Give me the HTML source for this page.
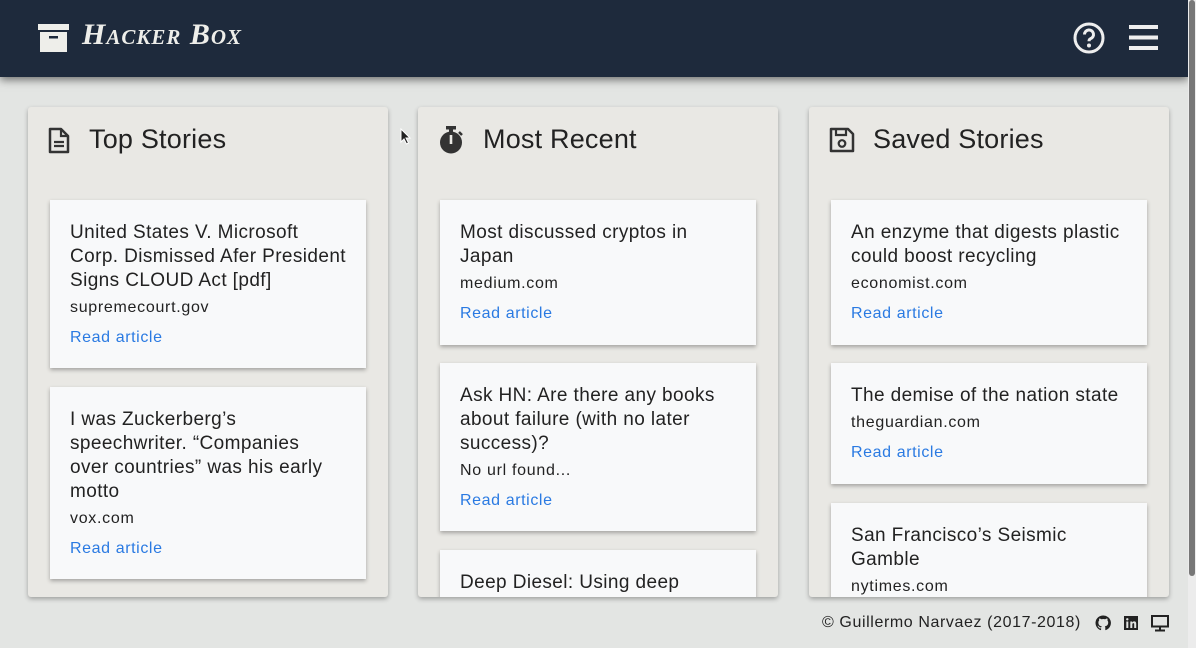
<!DOCTYPE html>
<html><head><meta charset="utf-8"><style>
*{box-sizing:border-box;margin:0;padding:0}
body{width:1196px;height:648px;overflow:hidden;background:#e3e5e3;font-family:"Liberation Sans",sans-serif;position:relative}
.hdr{position:absolute;left:0;top:0;width:1188px;height:77px;background:#1e2a3c;box-shadow:0 3px 8px rgba(0,0,0,.5)}
.logo{position:absolute;left:82px;top:18px;color:#eeeeea;font:italic bold 30px "Liberation Serif",serif;letter-spacing:1px;font-variant:small-caps}
.sb{position:absolute;right:0;top:0;width:8px;height:648px;background:#ececec}
.sb i{position:absolute;left:1px;top:0;width:6px;height:576px;background:#777;border-radius:3px}
.col{position:absolute;top:107px;width:360px;height:490px;background:#e9e8e4;border-radius:3px;box-shadow:0 2px 5px rgba(0,0,0,.3);overflow:hidden}
.col h2{position:absolute;left:61px;top:17px;font-size:27px;font-weight:normal;color:#222;letter-spacing:.2px}
.col svg.ic{position:absolute;left:20px;top:20px}
.card{position:absolute;left:22px;width:316px;background:#f8f9fa;box-shadow:0 2px 4px rgba(0,0,0,.3);padding:21px 0 0 20px;color:#222;white-space:nowrap}
.card b{display:block;font-weight:normal;font-size:19px;line-height:24px;letter-spacing:.4px}
.card .u{font-size:16px;margin-top:5px;line-height:20px;letter-spacing:.7px}
.card .r{font-size:16px;color:#2a7ae2;margin-top:10px;line-height:20px;letter-spacing:.6px}
.foot{position:absolute;left:822px;top:614px;font-size:16px;color:#222;letter-spacing:.6px}
</style></head><body>
<div class="hdr">
<svg style="position:absolute;left:38px;top:24px" width="31" height="28" viewBox="0 0 31 28"><rect x="0" y="0" width="31" height="6" fill="#eeeeea"/><rect x="2" y="8" width="27" height="20" fill="#eeeeea"/><rect x="11" y="12" width="9" height="2.5" fill="#1e2a3c"/></svg>
<div class="logo">Hacker Box</div>
<svg style="position:absolute;left:1073px;top:22px" width="32" height="32" viewBox="0 0 32 32"><circle cx="16" cy="16" r="14" fill="none" stroke="#eee" stroke-width="3"/><path d="M11.5 12.5a4.5 4.5 0 1 1 6 4.2c-1.2.5-1.5 1.2-1.5 2.5" fill="none" stroke="#eee" stroke-width="3"/><circle cx="16" cy="23.5" r="2" fill="#eee"/></svg>
<svg style="position:absolute;left:1129px;top:25px" width="29" height="26"><rect y="0" width="29" height="4" fill="#eee"/><rect y="10.5" width="29" height="4" fill="#eee"/><rect y="21" width="29" height="4" fill="#eee"/></svg>
</div>
<div class="sb"><i></i></div>

<div class="col" style="left:28px">
<svg class="ic" width="22" height="27" viewBox="0 0 22 27"><path d="M2 2h11l7 7v16H2z" fill="none" stroke="#333" stroke-width="2.5" stroke-linejoin="round"/><path d="M13 2v7h7M6 15h10M6 19h10" stroke="#333" stroke-width="2.2" fill="none"/></svg>
<h2>Top Stories</h2>
<div class="card" style="top:93px;height:168px"><b>United States V. Microsoft<br>Corp. Dismissed Afer President<br>Signs CLOUD Act [pdf]</b><div class="u">supremecourt.gov</div><div class="r">Read article</div></div>
<div class="card" style="top:280px;height:192px"><b>I was Zuckerberg’s<br>speechwriter. “Companies<br>over countries” was his early<br>motto</b><div class="u">vox.com</div><div class="r">Read article</div></div>
</div>

<div class="col" style="left:418px">
<svg class="ic" width="26" height="28" viewBox="0 0 26 28" style="top:19px"><rect x="8" y="0" width="10" height="3.5" fill="#333"/><rect x="11" y="3" width="4" height="4" fill="#333"/><circle cx="13" cy="16.5" r="11" fill="#333"/><rect x="11.7" y="9" width="2.6" height="9" fill="#e9e8e4"/><path d="M21 6l3 3" stroke="#333" stroke-width="2.5"/></svg>
<h2 style="left:65px">Most Recent</h2>
<div class="card" style="top:93px;height:145px"><b>Most discussed cryptos in<br>Japan</b><div class="u">medium.com</div><div class="r">Read article</div></div>
<div class="card" style="top:256px;height:168px"><b>Ask HN: Are there any books<br>about failure (with no later<br>success)?</b><div class="u">No url found...</div><div class="r">Read article</div></div>
<div class="card" style="top:443px;height:80px"><b>Deep Diesel: Using deep</b></div>
</div>

<div class="col" style="left:809px">
<svg class="ic" width="26" height="26" viewBox="0 0 26 26"><path d="M2 2h17l5 5v17H2z" fill="none" stroke="#333" stroke-width="2.5" stroke-linejoin="round"/><path d="M7 2v6h10V2" fill="none" stroke="#333" stroke-width="2.2"/><circle cx="13" cy="16.5" r="3.3" fill="none" stroke="#333" stroke-width="2.2"/></svg>
<h2 style="left:64px">Saved Stories</h2>
<div class="card" style="top:93px;height:145px"><b>An enzyme that digests plastic<br>could boost recycling</b><div class="u">economist.com</div><div class="r">Read article</div></div>
<div class="card" style="top:256px;height:121px"><b>The demise of the nation state</b><div class="u">theguardian.com</div><div class="r">Read article</div></div>
<div class="card" style="top:396px;height:120px"><b>San Francisco’s Seismic<br>Gamble</b><div class="u">nytimes.com</div></div>
</div>

<div class="foot">© Guillermo Narvaez (2017-2018)</div>
<svg style="position:absolute;left:1095px;top:615px" width="16" height="16" viewBox="0 0 16 16"><path d="M8 .5a7.5 7.5 0 0 0-2.4 14.6c.4 0 .5-.2.5-.4v-1.4c-2.1.5-2.5-.9-2.5-.9-.3-.9-.8-1.1-.8-1.1-.7-.5.1-.5.1-.5.8.1 1.2.8 1.2.8.7 1.2 1.8.8 2.2.6.1-.5.3-.8.5-1-1.7-.2-3.4-.8-3.4-3.7 0-.8.3-1.5.8-2-.1-.2-.3-1 .1-2 0 0 .6-.2 2.1.8a7 7 0 0 1 3.8 0c1.4-1 2.1-.8 2.1-.8.4 1 .2 1.8.1 2 .5.5.8 1.2.8 2 0 2.9-1.8 3.5-3.4 3.7.3.2.5.7.5 1.4v2.1c0 .2.1.5.5.4A7.5 7.5 0 0 0 8 .5z" fill="#222"/></svg>
<svg style="position:absolute;left:1124px;top:616px" width="14" height="14"><rect width="14" height="14" fill="#222"/><rect x="2.3" y="5.5" width="2" height="6.5" fill="#e3e5e3"/><circle cx="3.3" cy="3.3" r="1.2" fill="#e3e5e3"/><path d="M6.3 12V5.5h1.9v1c.5-.8 1.3-1.1 2.1-1.1 1.4 0 1.9.9 1.9 2.4V12h-2V8.2c0-.7-.2-1.1-.8-1.1-.7 0-1.1.5-1.1 1.2V12z" fill="#e3e5e3"/></svg>
<svg style="position:absolute;left:1151px;top:615px" width="18" height="17"><rect x="1" y="1" width="16" height="10.5" fill="none" stroke="#222" stroke-width="2"/><rect x="8" y="12" width="2" height="3" fill="#222"/><rect x="4" y="14.5" width="10" height="2" fill="#222"/></svg>
<svg style="position:absolute;left:400px;top:128px" width="12" height="18"><path d="M1 1v13l3-3 2.5 5 2-1-2.5-5h4z" fill="#222" stroke="#fff" stroke-width="1"/></svg>
</body></html>
